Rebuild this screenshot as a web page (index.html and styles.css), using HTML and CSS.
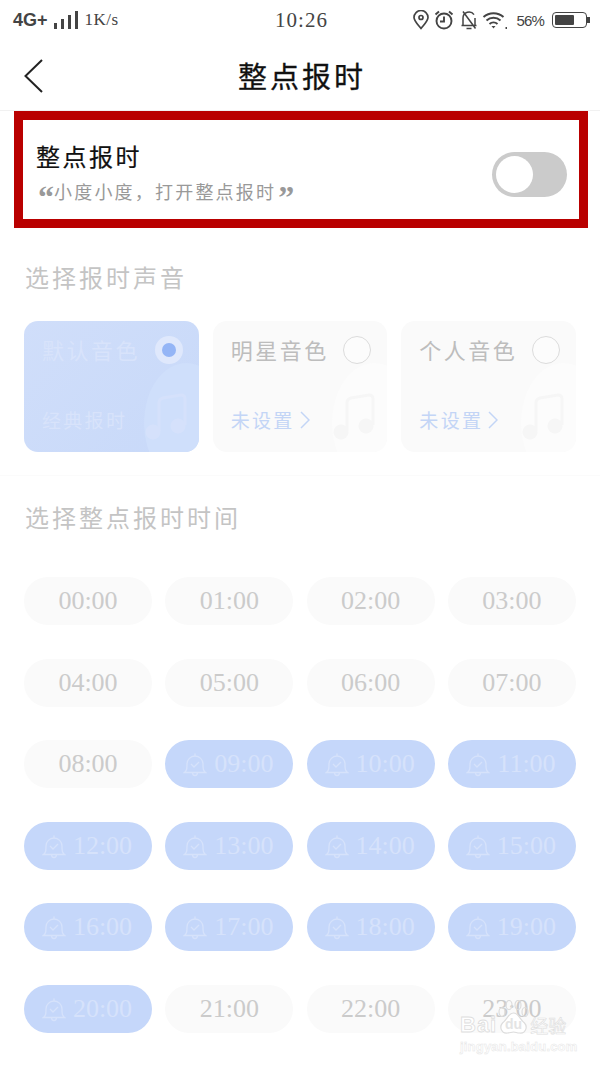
FILE: index.html
```html
<html>
<head>
    <meta charset="utf-8">
    <link rel="stylesheet" href="styles.css">
</head>
<body>
    <div class="page">
        <!-- Status bar -->
        <div class="status-bar">
            <div class="status-left">
                <span class="net">4G+</span>
                <svg class="signal" width="26" height="18" viewBox="0 0 26 18"><path d="M1 12h3v6H1zM8 8h3v10H8zM15 4h3v14h-3zM22 0h3v18h-3z" fill="#444"/></svg>
                <span class="speed">1K/s</span>
            </div>
            <div class="clock">10:26</div>
            <div class="status-right">
                <svg class="pin" width="18" height="20" viewBox="0 0 18 20" fill="none" stroke="#444" stroke-width="1.7"><path d="M9 18.500C5 13.500 2 10.700 2 7.500a7 7 0 0 1 14 0c0 3.200-3 6-7 11z"/><circle cx="9" cy="7.500" r="2"/></svg>
                <svg class="alarm" width="20" height="20" viewBox="0 0 20 20" fill="none" stroke="#444" stroke-width="1.900"><circle cx="10" cy="11" r="7.500"/><path d="M10 6.500V11.500H6M1.500 4.500L5 1.500M18.500 4.500L15 1.500"/></svg>
                <svg class="mute" width="18" height="20" viewBox="0 0 18 20" fill="none" stroke="#444" stroke-width="1.500"><path d="M3 15.500V8a6 6 0 0 1 11-3.300M15 8v7.500M1.500 15.500h15M6.500 18.500h5M3 1.500l12.500 17"/></svg>
                <svg class="wifi" width="26" height="20" viewBox="0 0 26 20" fill="none" stroke="#444" stroke-width="2"><path d="M1.500 7a15 15 0 0 1 20 0M4.500 10.500a10.500 10.500 0 0 1 14 0M7.500 14a6 6 0 0 1 8 0"/><path d="M9.500 16h4l-2 2.500z" fill="#444" stroke="none"/><path d="M23.500 17h1.500v2h-1.500z" fill="#444" stroke="none"/></svg>
                <span class="percent">56%</span>
                <div class="battery"><div class="battery-level"></div></div>
                <div class="battery-tip"></div>
            </div>
        </div>

        <!-- Nav -->
        <div class="nav">
            <svg class="back" width="20" height="34" viewBox="0 0 20 34" fill="none" stroke="#222" stroke-width="2"><path d="M18 1L1.500 17 18 33"/></svg>
            <h1 class="nav-title">整点报时</h1>
        </div>

        <!-- Highlighted switch row -->
        <div class="switch-box">
            <div>
                <div class="switch-title">整点报时</div>
                <div class="switch-sub"><span class="quote">“</span>小度小度，打开整点报时<span class="quote">”</span></div>
            </div>
            <div class="toggle"><div class="knob"></div></div>
        </div>

        <h2 class="section-title first">选择报时声音</h2>
        <div class="cards">
            <div class="card selected">
                <div class="card-top"><span class="card-name">默认音色</span><span class="radio"><i></i></span></div>
                <div class="card-link">经典报时</div>
                <svg class="note" width="44" height="52" viewBox="0 0 44 52"><path d="M14 42V14q0-4 4-5l18-3q4 0 4 4v26" fill="none" stroke="currentColor" stroke-width="3"/><circle cx="8" cy="43" r="7.500" fill="currentColor"/><circle cx="33" cy="37" r="7.500" fill="currentColor"/></svg>
            </div>
            <div class="card">
                <div class="card-top"><span class="card-name">明星音色</span><span class="radio"></span></div>
                <div class="card-link">未设置<svg class="chev" width="10" height="18" viewBox="0 0 10 18" fill="none" stroke="currentColor" stroke-width="1.500"><path d="M1 1l8 8-8 8"/></svg></div>
                <svg class="note" width="44" height="52" viewBox="0 0 44 52"><path d="M14 42V14q0-4 4-5l18-3q4 0 4 4v26" fill="none" stroke="currentColor" stroke-width="3"/><circle cx="8" cy="43" r="7.500" fill="currentColor"/><circle cx="33" cy="37" r="7.500" fill="currentColor"/></svg>
            </div>
            <div class="card">
                <div class="card-top"><span class="card-name">个人音色</span><span class="radio"></span></div>
                <div class="card-link">未设置<svg class="chev" width="10" height="18" viewBox="0 0 10 18" fill="none" stroke="currentColor" stroke-width="1.500"><path d="M1 1l8 8-8 8"/></svg></div>
                <svg class="note" width="44" height="52" viewBox="0 0 44 52"><path d="M14 42V14q0-4 4-5l18-3q4 0 4 4v26" fill="none" stroke="currentColor" stroke-width="3"/><circle cx="8" cy="43" r="7.500" fill="currentColor"/><circle cx="33" cy="37" r="7.500" fill="currentColor"/></svg>
            </div>
        </div>

        <div class="divider"></div>

        <h2 class="section-title second">选择整点报时时间</h2>
        <div class="hours" id="hours"></div>

        <!-- Watermark -->
        <div class="watermark">
            <div class="wm-top">
                <span class="wm-bai">Bai</span>
                <svg class="wm-paw" width="31" height="36" viewBox="0 0 31 36" fill="none" stroke="#dcdcdc" stroke-width="1.200">
                    <ellipse cx="4" cy="12" rx="3" ry="4.500"/><ellipse cx="11" cy="5" rx="3" ry="4.500"/><ellipse cx="20" cy="5" rx="3" ry="4.500"/><ellipse cx="27" cy="12" rx="3" ry="4.500"/>
                    <path d="M15.500 13c5 0 6 6 11 10 3.500 4 1 11-5 10-2.500 0-4-1-6-1s-3.500 1-6 1c-6 1-8.500-6-5-10 5-4 6-10 11-10z" fill="#fff"/>
                    <text x="15.500" y="29" text-anchor="middle" font-size="14" font-weight="bold" fill="#e4e4e4" stroke="none">du</text>
                </svg>
                <span class="wm-jy">经验</span>
            </div>
            <div class="wm-url">jingyan.baidu.com</div>
        </div>
    </div>

    <script>
        // 09:00 - 20:00 are switched on
        var bell = '<svg class="bell" width="24" height="26" viewBox="0 0 24 26" fill="none" stroke="currentColor" stroke-width="1.300"><path d="M1.500 21.500c2.500-2 2.500-4 2.500-8.500a8 8 0 0 1 16 0c0 4.500 0 6.500 2.500 8.500zM9.500 21.500c0 4 5 4 5 0M12 5V2.500M8 13l3 3 5-5"/></svg>';
        var box = document.getElementById('hours');
        var html = '';
        for (var h = 0; h < 24; h++) {
            var label = (h < 10 ? '0' + h : h) + ':00';
            var on = h >= 9 && h <= 20;
            html += '<div class="pill' + (on ? ' on' : '') + '">' + (on ? bell : '') + '<span>' + label + '</span></div>';
        }
        box.innerHTML = html;
    </script>
</body>
</html>
```
FILE: styles.css
```css
* {
    box-sizing: border-box;
}
html, body {
    margin: 0;
    padding: 0;
    background-color: #fff;
}
.page {
    position: relative;
    width: 600px;
    height: 1066px;
    overflow: hidden;
    font-family: "Liberation Serif", "Noto Sans CJK SC", serif;
}
.status-bar {
    height: 40px;
    padding: 0 10px 0 13px;
    display: grid;
    grid-template-columns: 1fr auto 1fr;
    align-items: center;
    color: #444;
}
.status-left, .status-right {
    display: flex;
    align-items: center;
}
.status-right {
    justify-content: flex-end;
}
.net {
    font-family: "Liberation Sans", sans-serif;
    font-size: 18px;
    font-weight: bold;
    color: #444;
    margin-right: 5px;
}
.signal {
    margin-right: 6px;
}
.speed {
    font-size: 17px;
    letter-spacing: 0.5px;
}
.clock {
    font-size: 21px;
    letter-spacing: 1px;
}
.alarm {
    margin-left: 4px;
}
.mute {
    margin-left: 6px;
}
.wifi {
    margin-left: 4px;
}
.percent {
    font-size: 15px;
    margin-left: 8px;
    letter-spacing: -0.8px;
    font-family: "Liberation Sans", sans-serif;
}
.battery {
    width: 35px;
    height: 16px;
    margin-left: 8px;
    border: 1.500px solid #444;
    border-radius: 4px;
    padding: 2px;
}
.battery-level {
    width: 19px;
    height: 100%;
    background-color: #444;
    border-radius: 1px;
}
.battery-tip {
    width: 3px;
    height: 6px;
    background-color: #444;
}
.nav {
    height: 71px;
    position: relative;
    display: flex;
    align-items: center;
    justify-content: center;
    border-bottom: 1px solid #f1f1f1;
}
.back {
    position: absolute;
    left: 24px;
    top: 19px;
}
.nav-title {
    margin: 0;
    padding-left: 4px;
    font-size: 29px;
    font-weight: normal;
    letter-spacing: 3px;
    color: #111;
    -webkit-text-stroke: 0.3px #111;
}
.switch-box {
    height: 117px;
    margin: 0 12px 0 14px;
    border: 9px solid #b90000;
    padding: 9px 12px 0 13px;
    display: flex;
    align-items: center;
    justify-content: space-between;
    background-color: #fff;
}
.switch-title {
    font-size: 24px;
    line-height: 32px;
    letter-spacing: 2.500px;
    color: #111;
    -webkit-text-stroke: 0.2px #111;
}
.switch-sub {
    font-size: 18px;
    line-height: 26px;
    margin-top: 6px;
    letter-spacing: 2.200px;
    color: #999;
}
.quote {
    font-weight: bold;
    font-size: 32px;
    line-height: 0;
    letter-spacing: 0;
    vertical-align: -9px;
    margin-left: 2px;
}
.toggle {
    width: 75px;
    height: 45px;
    border-radius: 23px;
    background-color: #cbcbcb;
    padding: 4px;
}
.knob {
    width: 37px;
    height: 37px;
    border-radius: 50%;
    background-color: #fff;
}
.section-title {
    margin: 0;
    padding-left: 25px;
    font-size: 24px;
    line-height: 32px;
    font-weight: normal;
    letter-spacing: 3px;
    color: #c4c4c4;
}
.section-title.first {
    margin-top: 35px;
}
.section-title.second {
    margin-top: 27px;
}
.cards {
    margin: 26px 24px 0;
    display: grid;
    grid-template-columns: repeat(3, 1fr);
    gap: 14px;
}
.card {
    position: relative;
    height: 131px;
    padding: 11px 16px 0 18px;
    border-radius: 14px;
    background-color: #fafafa;
    overflow: hidden;
}
/* the faint big circle behind the note */
.card::before {
    content: "";
    position: absolute;
    right: -30px;
    top: 42px;
    width: 85px;
    height: 120px;
    border-radius: 50%;
    background-color: #fcfcfc;
}
.card.selected {
    background: linear-gradient(135deg, #d0defa, #c8d9f9);
}
.card.selected::before {
    background-color: #cfdffb;
}
.card-top {
    position: relative;
    display: flex;
    align-items: center;
    justify-content: space-between;
    height: 34px;
}
.card-name {
    font-size: 22px;
    letter-spacing: 2.500px;
    color: #bdbdbd;
}
.radio {
    width: 28px;
    height: 28px;
    margin-top: 2px;
    border-radius: 50%;
    border: 1.500px solid #dcdcdc;
    background-color: #fcfcfc;
    display: flex;
    align-items: center;
    justify-content: center;
    flex-shrink: 0;
}
.selected .radio {
    border: none;
    background-color: #dfe8fc;
}
.radio i {
    width: 14px;
    height: 14px;
    border-radius: 50%;
    background-color: #94b5f6;
}
.selected .card-name, .selected .card-link {
    color: #d8e3fb;
}
.card-link {
    position: absolute;
    left: 18px;
    top: 85px;
    display: flex;
    align-items: center;
    font-size: 19px;
    letter-spacing: 2.300px;
    color: #c3d5f6;
}
.chev {
    margin-left: 5px;
}
.note {
    position: absolute;
    right: 10px;
    bottom: 11px;
    color: #f6f6f6;
}
.selected .note {
    color: #d5e1fb;
}
.divider {
    height: 1px;
    margin-top: 23px;
    background-color: #fbfbfb;
}
.hours {
    margin: 42px 24px 0;
    display: grid;
    grid-template-columns: repeat(4, 1fr);
    column-gap: 13.300px;
    row-gap: 33.600px;
}
.pill {
    height: 48px;
    border-radius: 24px;
    background-color: #fafafa;
    display: flex;
    align-items: center;
    justify-content: center;
    font-size: 26px;
    color: #cbcbcb;
}
.pill.on {
    background-color: #c5d7fa;
    color: #d6e2fb;
    gap: 7px;
    padding-right: 2px;
}
.watermark {
    position: absolute;
    left: 460px;
    top: 1000px;
    width: 110px;
    font-family: "Liberation Sans", "Noto Sans CJK SC", sans-serif;
    color: #fff;
}
.wm-top {
    display: flex;
    align-items: center;
    height: 36px;
}
.wm-paw {
    margin: 0 1px 0 1px;
    flex-shrink: 0;
}
.wm-bai {
    font-size: 22px;
    font-weight: bold;
    margin-top: 14px;
    letter-spacing: 1px;
    -webkit-text-stroke: 0.8px #dedede;
}
.wm-jy {
    font-size: 18px;
    margin-top: 14px;
    white-space: nowrap;
    -webkit-text-stroke: 0.6px #dedede;
}
.wm-url {
    margin-top: 3px;
    font-size: 13px;
    font-weight: bold;
    letter-spacing: 0.2px;
    white-space: nowrap;
    -webkit-text-stroke: 0.5px #e6e6e6;
}
```
